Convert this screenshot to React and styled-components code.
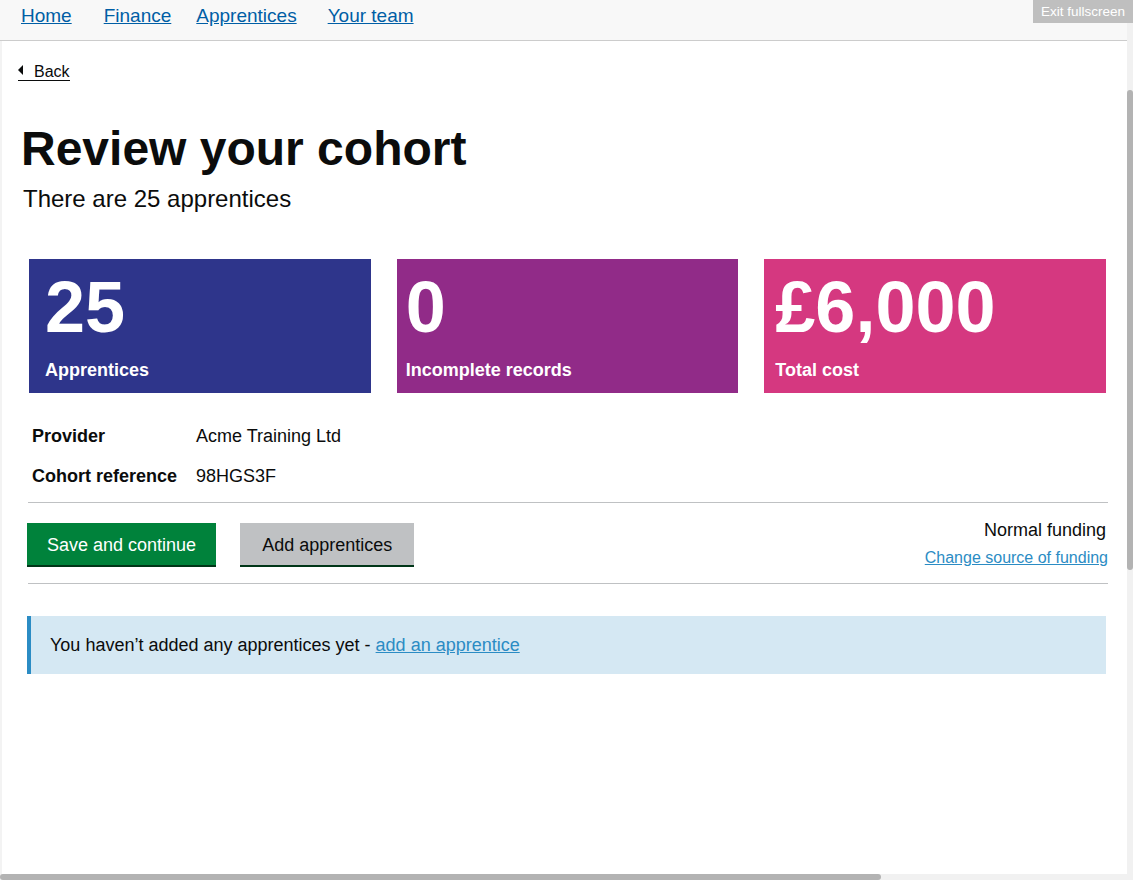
import React from "react";
import styled, { createGlobalStyle } from "styled-components";

const GlobalStyle = createGlobalStyle`
  html, body {
    margin: 0;
    padding: 0;
    background: #fff;
    font-family: "Liberation Sans", Arial, sans-serif;
    color: #0b0c0c;
  }
  * { box-sizing: border-box; }
`;

const stats = [
  { value: "25", label: "Apprentices", color: "#2e358b", pad: 16 },
  { value: "0", label: "Incomplete records", color: "#912b88", pad: 9 },
  { value: "£6,000", label: "Total cost", color: "#d53880", pad: 11 },
];

const navLinks = [
  { label: "Home", gap: 0 },
  { label: "Finance", gap: 32 },
  { label: "Apprentices", gap: 25 },
  { label: "Your team", gap: 31 },
];

const App = () => {
  return (
    <>
      <GlobalStyle />
      <Frame>
        <Viewport>
          <NavBar>
            <NavList>
              {navLinks.map((item) => (
                <NavItem key={item.label} $gap={item.gap}>
                  <NavLink href="#">{item.label}</NavLink>
                </NavItem>
              ))}
            </NavList>
          </NavBar>

          <Main>
            <BackLink href="#">
              <BackArrow />
              Back
            </BackLink>

            <Title>Review your cohort</Title>
            <Lead>There are 25 apprentices</Lead>

            <Section>
              <StatGrid>
                {stats.map((s) => (
                  <StatCard key={s.label} $bg={s.color} $pad={s.pad}>
                    <StatValue>{s.value}</StatValue>
                    <StatLabel>{s.label}</StatLabel>
                  </StatCard>
                ))}
              </StatGrid>

              <Summary>
                <SummaryKey>Provider</SummaryKey>
                <SummaryValue>Acme Training Ltd</SummaryValue>
                <SummaryKey>Cohort reference</SummaryKey>
                <SummaryValue>98HGS3F</SummaryValue>
              </Summary>

              <Rule />

              <ActionRow>
                <Buttons>
                  <Button $variant="primary">Save and continue</Button>
                  <Button $variant="secondary">Add apprentices</Button>
                </Buttons>
                <Funding>
                  <FundingType>Normal funding</FundingType>
                  <FundingLink href="#">Change source of funding</FundingLink>
                </Funding>
              </ActionRow>

              <Rule $top={16} />

              <InfoPanel>
                You haven’t added any apprentices yet -{" "}
                <PanelLink href="#">add an apprentice</PanelLink>
              </InfoPanel>
            </Section>
          </Main>
        </Viewport>

        <VTrack>
          <VThumb />
        </VTrack>
      </Frame>

      <ExitBadge>Exit fullscreen</ExitBadge>
      <HTrack>
        <HThumb />
      </HTrack>
    </>
  );
};

const Frame = styled.div`
  display: flex;
  height: 880px;
  overflow: hidden;
`;

const Viewport = styled.div`
  flex: 1;
  display: flex;
  flex-direction: column;
`;

const NavBar = styled.nav`
  height: 41px;
  background: #f8f8f8;
  border-bottom: 1px solid #cccccc;
  padding: 5px 0 0 21px;
`;

const NavList = styled.ul`
  display: flex;
  margin: 0;
  padding: 0;
  list-style: none;
`;

const NavItem = styled.li`
  margin-left: ${(p) => p.$gap}px;
`;

const NavLink = styled.a`
  font-size: 19px;
  line-height: 22px;
  color: #005ea5;
  text-decoration: underline;
`;

const Main = styled.main`
  flex: 1;
  border-left: 2px solid #f3f3f3;
  padding: 20px 19px 0 16px;
`;

const BackLink = styled.a`
  display: inline-flex;
  align-items: center;
  gap: 11px;
  font-size: 16px;
  line-height: 16px;
  color: #0b0c0c;
  text-decoration: none;
  border-bottom: 1px solid #0b0c0c;
`;

const BackArrow = styled.span`
  display: inline-block;
  width: 0;
  height: 0;
  margin-top: -4px;
  border-top: 5px solid transparent;
  border-bottom: 5px solid transparent;
  border-right: 5px solid #0b0c0c;
`;

const Title = styled.h1`
  margin: 44px 0 0 3px;
  font-size: 48px;
  line-height: 48px;
  font-weight: 700;
`;

const Lead = styled.p`
  margin: 11px 0 0 5px;
  font-size: 24px;
  line-height: 30px;
`;

const Section = styled.section`
  margin: 45px 0 0 9px;
`;

const StatGrid = styled.div`
  display: grid;
  grid-template-columns: repeat(3, 1fr);
  gap: 26px;
  margin: 0 2px;
`;

const StatCard = styled.div`
  background: ${(p) => p.$bg};
  color: #fff;
  height: 134px;
  padding: 12px 8px 12px ${(p) => p.$pad}px;
  display: flex;
  flex-direction: column;
  gap: 16px;
`;

const StatValue = styled.div`
  font-size: 72px;
  line-height: 72px;
  font-weight: 700;
`;

const StatLabel = styled.div`
  font-size: 18px;
  line-height: 22px;
  font-weight: 700;
`;

const Summary = styled.dl`
  display: grid;
  grid-template-columns: 164px 1fr;
  margin: 23px 0 0;
  padding-left: 5px;
  font-size: 18px;
  line-height: 40px;
`;

const SummaryKey = styled.dt`
  font-weight: 700;
`;

const SummaryValue = styled.dd`
  margin: 0;
`;

const Rule = styled.hr`
  border: 0;
  border-top: 1px solid #bfc1c3;
  margin: ${(p) => p.$top || 6}px 0 0 1px;
`;

const ActionRow = styled.div`
  display: flex;
  justify-content: space-between;
  align-items: flex-start;
  height: 44px;
  margin-top: 20px;
`;

const Buttons = styled.div`
  display: flex;
  gap: 24px;
`;

const Button = styled.button`
  height: 42px;
  border: 0;
  border-radius: 0;
  padding: 0 ${(p) => (p.$variant === "primary" ? 20 : 22)}px;
  font-family: inherit;
  font-size: 18px;
  line-height: 44px;
  cursor: pointer;
  background: ${(p) => (p.$variant === "primary" ? "#00823b" : "#bfc1c3")};
  color: ${(p) => (p.$variant === "primary" ? "#fff" : "#0b0c0c")};
  box-shadow: 0 2px 0 #003618;
`;

const Funding = styled.div`
  display: flex;
  flex-direction: column;
  align-items: flex-end;
  gap: 7px;
  margin-top: -4px;
`;

const FundingType = styled.span`
  font-size: 18px;
  line-height: 22px;
  margin-right: 2px;
`;

const FundingLink = styled.a`
  font-size: 16px;
  line-height: 20px;
  color: #2b8cc4;
  text-decoration: underline;
`;

const InfoPanel = styled.div`
  display: flex;
  align-items: center;
  white-space: pre;
  height: 58px;
  margin: 32px 2px 0 0;
  padding: 0 19px;
  background: #d5e8f3;
  border-left: 4px solid #2b8cc4;
  font-size: 18px;
  line-height: 22px;
`;

const PanelLink = styled.a`
  color: #2b8cc4;
  text-decoration: underline;
`;

const VTrack = styled.div`
  width: 6px;
  background: #f1f1f1;
  padding-top: 90px;
`;

const VThumb = styled.div`
  width: 6px;
  height: 480px;
  border-radius: 3px;
  background: #b3b3b3;
`;

const ExitBadge = styled.div`
  position: fixed;
  top: 0;
  right: 0;
  width: 100px;
  height: 23px;
  background: #bfbfbf;
  color: #fff;
  font-size: 13.5px;
  line-height: 23px;
  text-align: center;
`;

const HTrack = styled.div`
  position: fixed;
  left: 0;
  right: 6px;
  bottom: 0;
  height: 6px;
  background: #f1f1f1;
`;

const HThumb = styled.div`
  width: 881px;
  height: 6px;
  border-radius: 3px;
  background: #b3b3b3;
`;

export default App;
